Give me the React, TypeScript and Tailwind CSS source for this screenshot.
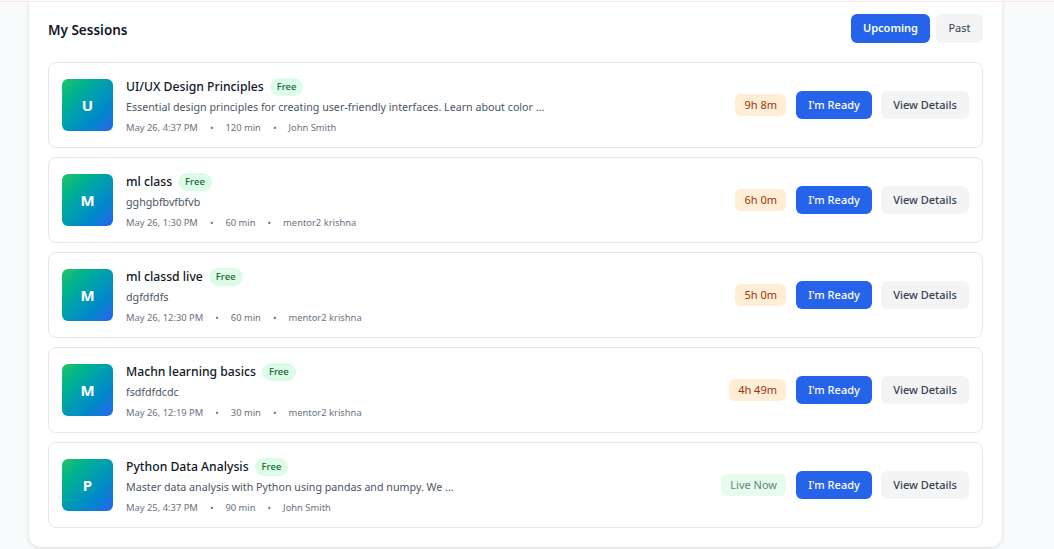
import React from 'react';

type Session = {
  letter: string;
  title: string;
  description: string;
  date: string;
  duration: string;
  mentor: string;
  status: string;
  live?: boolean;
};

const sessions: Session[] = [
  {
    letter: 'U',
    title: 'UI/UX Design Principles',
    description: 'Essential design principles for creating user-friendly interfaces. Learn about color ...',
    date: 'May 26, 4:37 PM',
    duration: '120 min',
    mentor: 'John Smith',
    status: '9h 8m',
  },
  {
    letter: 'M',
    title: 'ml class',
    description: 'gghgbfbvfbfvb',
    date: 'May 26, 1:30 PM',
    duration: '60 min',
    mentor: 'mentor2 krishna',
    status: '6h 0m',
  },
  {
    letter: 'M',
    title: 'ml classd live',
    description: 'dgfdfdfs',
    date: 'May 26, 12:30 PM',
    duration: '60 min',
    mentor: 'mentor2 krishna',
    status: '5h 0m',
  },
  {
    letter: 'M',
    title: 'Machn learning basics',
    description: 'fsdfdfdcdc',
    date: 'May 26, 12:19 PM',
    duration: '30 min',
    mentor: 'mentor2 krishna',
    status: '4h 49m',
  },
  {
    letter: 'P',
    title: 'Python Data Analysis',
    description: 'Master data analysis with Python using pandas and numpy. We ...',
    date: 'May 25, 4:37 PM',
    duration: '90 min',
    mentor: 'John Smith',
    status: 'Live Now',
    live: true,
  },
];

function SessionCard({ session }: { session: Session }) {
  return (
    <div className="flex h-[86px] items-center justify-between rounded-lg border border-[#e5e7eb] bg-white px-[13px]">
      <div className="flex items-center gap-[13px]">
        <div className="flex h-[52px] w-[51px] items-center justify-center rounded-md bg-gradient-to-br from-[#22c55e] to-[#2563eb] text-[15px] font-bold text-white">
          {session.letter}
        </div>
        <div className="flex flex-col pt-[3px]">
          <div className="flex items-center gap-[6px]">
            <span className="text-[12.2px] font-medium text-[#111827]">{session.title}</span>
            <span className="rounded-full bg-[#dcfce7] px-[7px] py-[2px] text-[9.5px] font-medium leading-[14px] text-[#166534]">
              Free
            </span>
          </div>
          <p className="mt-[2px] text-[10.7px] leading-[16px] text-[#4b5563]">{session.description}</p>
          <div className="mt-[6px] flex items-center gap-[12px] text-[9.4px] leading-[14px] text-[#6b7280]">
            <span>{session.date}</span>
            <span>•</span>
            <span>{session.duration}</span>
            <span>•</span>
            <span>{session.mentor}</span>
          </div>
        </div>
      </div>
      <div className="flex items-center">
        <span
          className={`flex h-[22px] items-center rounded-md px-[9px] text-[11px] ${
            session.live ? 'bg-[#e7fbee] text-[#5b8a68]' : 'bg-[#ffedd5] text-[#9a3412]'
          }`}
        >
          {session.status}
        </span>
        <button className="ml-[10px] h-[28px] w-[76px] rounded-md bg-[#2563eb] text-[11px] font-medium text-white">
          I'm Ready
        </button>
        <button className="ml-[9px] h-[28px] w-[88px] rounded-md bg-[#f3f4f6] text-[11px] font-medium text-[#374151]">
          View Details
        </button>
      </div>
    </div>
  );
}

export default function App() {
  return (
    <div
      className="h-[549px] w-[1054px] overflow-hidden bg-[#f9fafb]"
      style={{ fontFamily: '"Noto Sans", "Open Sans", sans-serif' }}
    >
      <div className="relative">
        <div className="absolute left-0 right-0 top-[1px] z-10 h-px bg-[#fbe3e7]" />
      </div>
      <div className="ml-[29px] w-[973px] rounded-b-xl bg-white px-[19px] pb-[19px] pt-[14px] shadow-[0_1px_4px_rgba(0,0,0,0.12)]">
        <div className="flex items-center justify-between">
          <h2 className="mt-[3px] text-[13.5px] font-semibold text-[#111827]">My Sessions</h2>
          <div className="flex gap-[6px]">
            <button className="h-[29px] w-[79px] rounded-md bg-[#2563eb] text-[11px] font-semibold text-white">
              Upcoming
            </button>
            <button className="h-[29px] w-[47px] rounded-md bg-[#f3f4f6] text-[11px] text-[#374151]">Past</button>
          </div>
        </div>
        <div className="mt-[19px] flex flex-col gap-[9px]">
          {sessions.map((s, i) => (
            <SessionCard key={i} session={s} />
          ))}
        </div>
      </div>
    </div>
  );
}
